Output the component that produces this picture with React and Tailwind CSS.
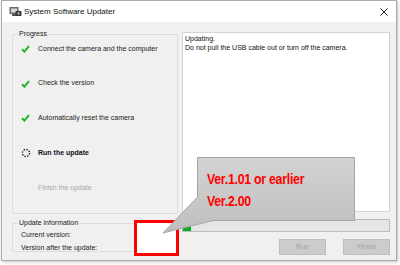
import React from 'react';

const font = { fontFamily: '"Liberation Sans", Arial, sans-serif' };

const Check = () => (
    <svg width="9" height="8" viewBox="0 0 9 8">
        <path d="M1 4.2 L3.4 6.6 L8 1.2" fill="none" stroke="#22b422" strokeWidth="2" />
    </svg>
);

const Spinner = () => (
    <svg width="10" height="10" viewBox="0 0 10 10">
        <circle cx="5" cy="5" r="3.6" fill="none" stroke="#333" strokeWidth="1.4" strokeDasharray="1.6 1.2" />
    </svg>
);

const steps = [
    { label: 'Connect the camera and the computer', state: 'done' },
    { label: 'Check the version', state: 'done' },
    { label: 'Automatically reset the camera', state: 'done' },
    { label: 'Run the update', state: 'active' },
    { label: 'Finish the update', state: 'todo' },
];

export default function App() {
    return (
        <div className="relative w-[400px] h-[265px] bg-white overflow-hidden" style={font}>
            <div className="w-[396px] h-[261px] ml-px border border-[#aaaaaa] bg-[#f0f0f0] flex flex-col shadow-[1px_1px_3px_rgba(0,0,0,0.25)]">
                {/* title bar */}
                <div className="h-[21px] bg-white flex items-center pl-[7px] pr-[8px] shrink-0">
                    <svg width="13" height="12" viewBox="0 0 13 12">
                        <rect x="0.5" y="1" width="9" height="7" fill="#6b6b6b" />
                        <rect x="2" y="2.5" width="6" height="4" fill="#d8d8d8" />
                        <rect x="3" y="8" width="4" height="2" fill="#555" />
                        <rect x="6.5" y="5" width="6" height="5" rx="1" fill="#333" />
                        <circle cx="9.5" cy="7.5" r="1.4" fill="#999" />
                    </svg>
                    <span className="ml-[2px] text-[8px] text-[#111]">System Software Updater</span>
                    <div className="ml-auto">
                        <svg width="8" height="8" viewBox="0 0 8 8">
                            <path d="M0.5 0.5 L7.5 7.5 M7.5 0.5 L0.5 7.5" stroke="#222" strokeWidth="1" />
                        </svg>
                    </div>
                </div>

                {/* body */}
                <div className="flex pl-[10px] pr-[6px] pt-[7px] gap-[4px]">
                    <div className="w-[166px] flex flex-col">
                        <fieldset className="h-[185px] border border-[#dcdcdc] rounded-[2px] px-[8px]">
                            <legend className="text-[7px] text-[#222] px-[1px] ml-[-3px] leading-[10px]">Progress</legend>
                            <div className="flex flex-col gap-[14.7px]">
                                {steps.map((s) => (
                                    <div key={s.label} className="h-[20px] flex items-center">
                                        <div className="w-[17px] flex items-center">
                                            {s.state === 'done' && <Check />}
                                            {s.state === 'active' && <Spinner />}
                                        </div>
                                        <span
                                            className={`text-[7px] ${s.state === 'active' ? 'font-bold text-[#111]' : s.state === 'todo' ? 'text-[#a8a8a8]' : 'text-[#222]'}`}
                                        >
                                            {s.label}
                                        </span>
                                    </div>
                                ))}
                            </div>
                        </fieldset>
                        <fieldset className="mt-[4px] h-[34px] border border-[#dcdcdc] rounded-[2px] px-[8px]">
                            <legend className="text-[7px] text-[#222] px-[1px] ml-[-3px] leading-[10px]">Update information</legend>
                            <div className="flex flex-col text-[7px] text-[#222] leading-[13px]">
                                <span>Current version:</span>
                                <span>Version after the update:</span>
                            </div>
                        </fieldset>
                    </div>

                    <div className="flex-1 flex flex-col pt-[3px]">
                        <div className="h-[180px] bg-white border border-[#d4d4d4] px-[2px] pt-px text-[7px] leading-[9px] text-[#111]">
                            <div>Updating.</div>
                            <div>Do not pull the USB cable out or turn off the camera.</div>
                        </div>
                        <div className="mt-[7px] h-[13px] bg-[#e6e6e6] border border-[#bcbcbc] flex">
                            <div className="w-[8px] h-full bg-[#06b025]" />
                        </div>
                        <div className="mt-[7px] flex justify-end gap-[17px]">
                            <div className="w-[47px] h-[16px] bg-[#cccccc] border border-[#bfbfbf] flex items-center justify-center text-[7px] text-[#a0a0a0]">Run</div>
                            <div className="w-[47px] h-[16px] bg-[#cccccc] border border-[#bfbfbf] flex items-center justify-center text-[7px] text-[#a0a0a0]">Finish</div>
                        </div>
                    </div>
                </div>
            </div>

            {/* annotation: red box */}
            <div className="absolute left-[134px] top-[220px] w-[45px] h-[36px] border-[3px] border-[#ff0000] bg-white" />

            {/* annotation: callout */}
            <svg className="absolute left-0 top-0" width="400" height="265" viewBox="0 0 400 265">
                <defs>
                    <linearGradient id="cg" x1="0" y1="0" x2="0" y2="1">
                        <stop offset="0" stopColor="#d3d3d3" />
                        <stop offset="1" stopColor="#bfbfbf" />
                    </linearGradient>
                </defs>
                <path
                    d="M197.5 157.5 H354.5 V220.5 H213 L163 233 L197.5 197 Z"
                    fill="url(#cg)"
                    stroke="#a6a6a6"
                    strokeWidth="1"
                />
            </svg>
            <div className="absolute left-[207px] top-[168px] flex flex-col origin-left scale-x-[0.82] text-[15px] tracking-[-0.3px] font-bold text-[#ff0000] leading-[22px]">
                <span>Ver.1.01 or earlier</span>
                <span>Ver.2.00</span>
            </div>
        </div>
    );
}
